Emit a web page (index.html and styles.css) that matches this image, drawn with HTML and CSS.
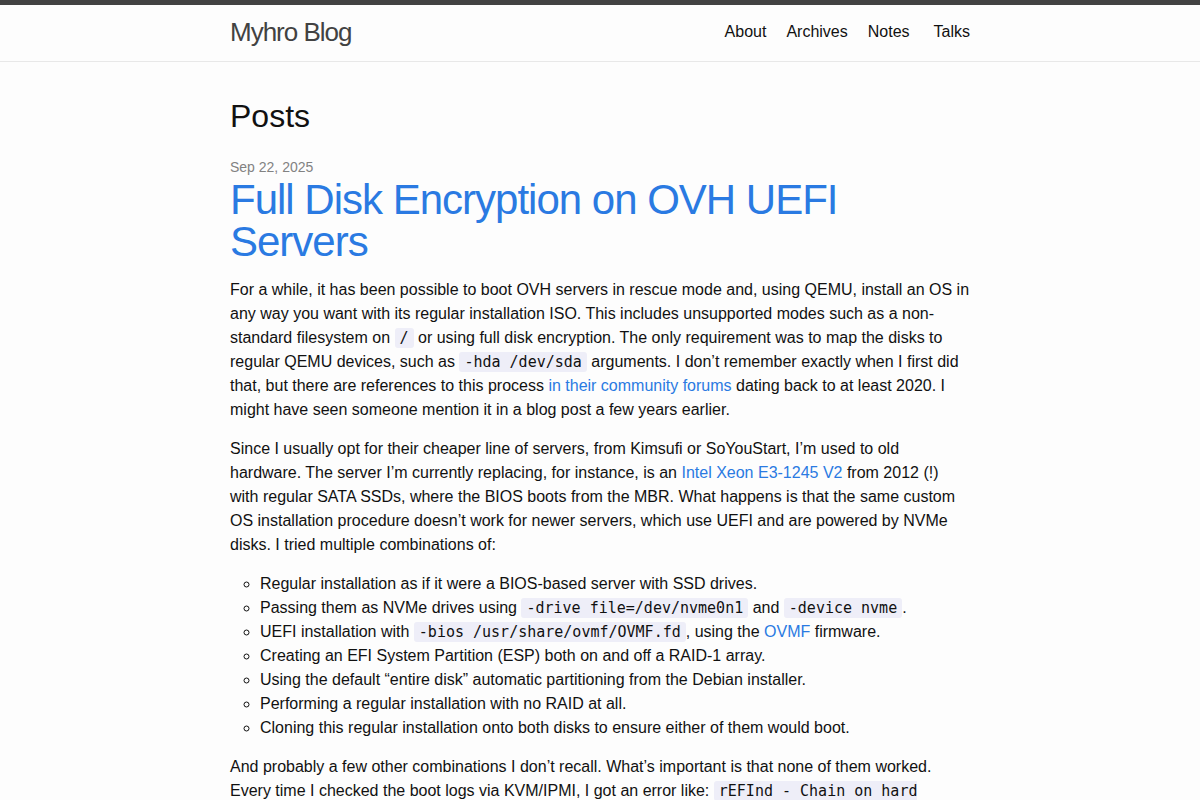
FILE: index.html
```html
<!DOCTYPE html>
<html lang="en">
<head>
    <meta charset="UTF-8">
    <meta name="viewport" content="width=device-width, initial-scale=1.0">
    <title>Posts | Myhro Blog</title>
    <link rel="stylesheet" href="styles.css">
</head>
<body>
    <header class="site-header">
        <div class="wrapper header-inner">
            <a href="#" class="site-title">Myhro Blog</a>
            <nav class="site-nav">
                <a href="#">About</a>
                <a href="#">Archives</a>
                <a href="#">Notes</a>
                <a href="#">Talks</a>
            </nav>
        </div>
    </header>

    <main class="wrapper page-content">
        <h1 class="page-heading">Posts</h1>

        <article class="post">
            <span class="post-meta">Sep 22, 2025</span>
            <h2 class="post-title"><a href="#">Full Disk Encryption on OVH UEFI Servers</a></h2>

            <p>For a while, it has been possible to boot OVH servers in rescue mode and, using QEMU, install an OS in any way you want with its regular installation ISO. This includes unsupported modes such as a non-standard filesystem on <code>/</code> or using full disk encryption. The only requirement was to map the disks to regular QEMU devices, such as <code>-hda /dev/sda</code> arguments. I don’t remember exactly when I first did that, but there are references to this process <a href="#">in their community forums</a> dating back to at least 2020. I might have seen someone mention it in a blog post a few years earlier.</p>

            <p>Since I usually opt for their cheaper line of servers, from Kimsufi or SoYouStart, I’m used to old hardware. The server I’m currently replacing, for instance, is an <a href="#">Intel Xeon E3-1245 V2</a> from 2012 (!) with regular SATA SSDs, where the BIOS boots from the MBR. What happens is that the same custom OS installation procedure doesn’t work for newer servers, which use UEFI and are powered by NVMe disks. I tried multiple combinations of:</p>

            <ul>
                <li>Regular installation as if it were a BIOS-based server with SSD drives.</li>
                <li>Passing them as NVMe drives using <code>-drive file=/dev/nvme0n1</code> and <code>-device nvme</code>.</li>
                <li>UEFI installation with <code>-bios /usr/share/ovmf/OVMF.fd</code>, using the <a href="#">OVMF</a> firmware.</li>
                <li>Creating an EFI System Partition (ESP) both on and off a RAID-1 array.</li>
                <li>Using the default “entire disk” automatic partitioning from the Debian installer.</li>
                <li>Performing a regular installation with no RAID at all.</li>
                <li>Cloning this regular installation onto both disks to ensure either of them would boot.</li>
            </ul>

            <p>And probably a few other combinations I don’t recall. What’s important is that none of them worked. Every time I checked the boot logs via KVM/IPMI, I got an error like: <code>rEFInd - Chain on hard drive failed</code>.</p>
        </article>
    </main>
</body>
</html>
```

FILE: styles.css
```css
body {
    margin: 0;
    font-family: "Liberation Sans", Arial, sans-serif;
    font-size: 16px;
    line-height: 1.5;
    color: #111;
    background-color: #fdfdfd;
}
a {
    color: #2a7ae2;
    text-decoration: none;
}
.wrapper {
    max-width: 740px;
    margin: 0 auto;
}

/* header */
.site-header {
    border-top: 5px solid #424242;
    border-bottom: 1px solid #e8e8e8;
}
.header-inner {
    display: flex;
    justify-content: space-between;
    align-items: center;
    height: 56px;
    padding-bottom: 2px;
    box-sizing: border-box;
}
.site-title {
    font-size: 26px;
    letter-spacing: -1px;
    color: #424242;
}
.site-nav {
    display: flex;
    gap: 20px;
}
.site-nav a {
    color: #111;
}
.site-nav a:last-child {
    margin-left: 4px;
}

/* posts */
.page-content {
    padding: 30px 0;
}
.page-heading {
    font-size: 32px;
    font-weight: normal;
    margin: 0 0 15px;
}
.post-meta {
    font-size: 14px;
    color: #828282;
}
.post-title {
    font-size: 42px;
    font-weight: normal;
    letter-spacing: -1px;
    line-height: 1;
    margin: 0 0 15px;
}
.post p {
    margin: 0 0 15px;
}
.post ul {
    margin: 0 0 15px;
    padding-left: 30px;
    list-style: circle;
}
code {
    font-family: "DejaVu Sans Mono", monospace;
    font-size: 15px;
    background-color: #eeeef8;
    border-radius: 3px;
    padding: 1px 5px;
}
```
